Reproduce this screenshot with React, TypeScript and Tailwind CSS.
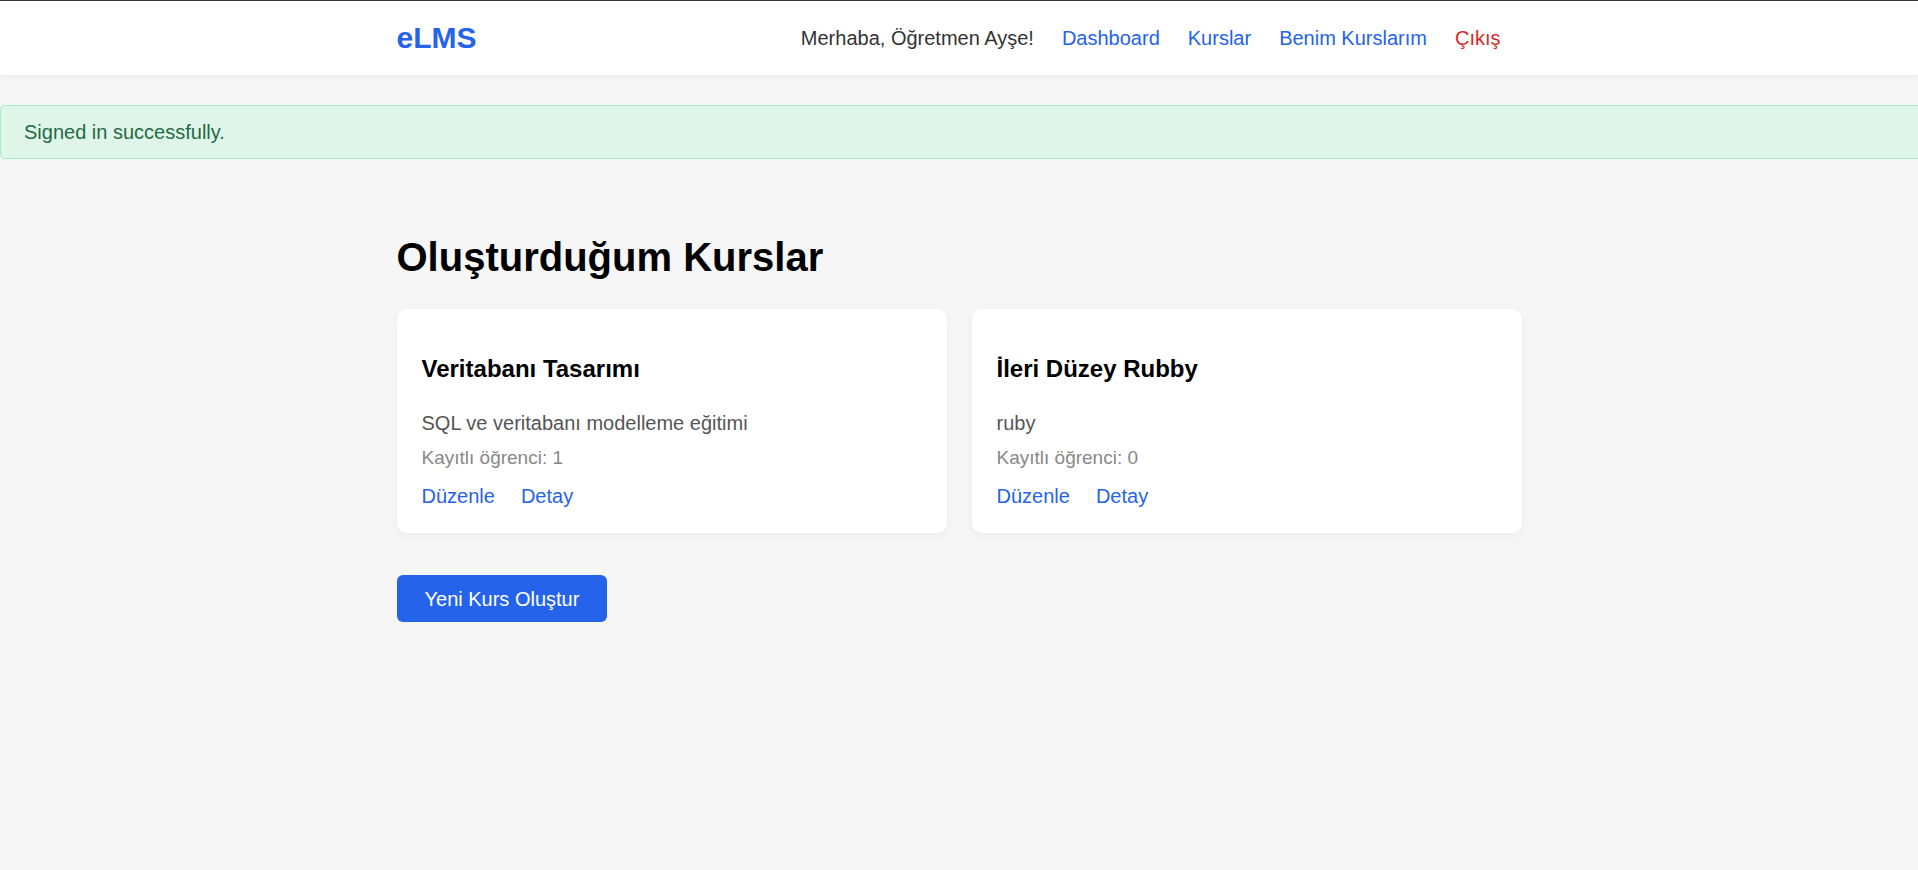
import React from "react";

interface Course {
  id: number;
  title: string;
  description: string;
  students: number;
}

const COURSES: Course[] = [
  {
    id: 1,
    title: "Veritabanı Tasarımı",
    description: "SQL ve veritabanı modelleme eğitimi",
    students: 1,
  },
  { id: 2, title: "İleri Düzey Rubby", description: "ruby", students: 0 },
];

function Navbar() {
  return (
    <>
      <div className="h-px bg-[#3a3a3a]" />
      <header className="bg-white h-[74px] shadow-[0_2px_6px_rgba(0,0,0,0.05)] relative">
        <div className="max-w-[1125px] mx-auto h-full flex items-center justify-between">
          <a href="#" className="text-[30px] font-bold text-[#2563eb] leading-[34px]">
            eLMS
          </a>
          <nav className="flex items-center gap-7 pr-[21px] text-[20px] leading-[24px]">
            <span className="text-[#333]">Merhaba, Öğretmen Ayşe!</span>
            <a href="#" className="text-[#2563eb]">
              Dashboard
            </a>
            <a href="#" className="text-[#2563eb]">
              Kurslar
            </a>
            <a href="#" className="text-[#2563eb]">
              Benim Kurslarım
            </a>
            <a href="#" className="text-[#dc2626]">
              Çıkış
            </a>
          </nav>
        </div>
      </header>
    </>
  );
}

function CourseCard({ course }: { course: Course }) {
  return (
    <div className="bg-white rounded-[10px] shadow-[0_2px_10px_rgba(0,0,0,0.05)] px-[25px] pt-[46px] pb-[25px]">
      <h3 className="text-[24px] font-bold leading-[28px] text-black">
        {course.title}
      </h3>
      <p className="mt-[28px] text-[20px] leading-[24px] text-[#555]">
        {course.description}
      </p>
      <p className="mt-[12px] text-[19px] leading-[22px] text-[#888]">
        Kayıtlı öğrenci: {course.students}
      </p>
      <div className="mt-[15px] flex text-[20px] leading-[24px] text-[#2563eb]">
        <a href="#" className="mr-[26px]">
          Düzenle
        </a>
        <a href="#">Detay</a>
      </div>
    </div>
  );
}

export default function App() {
  return (
    <div className="min-h-screen overflow-hidden bg-[#f6f6f6] font-['Liberation_Sans',Arial,sans-serif]">
      <Navbar />

      <div className="mt-[30px] w-[calc(100%+24px)] bg-[#e0f5ea] border border-[#a9e8c8] rounded-[5px] px-[23px] py-[14px] text-[20px] leading-[24px] text-[#1f6b42]">
        Signed in successfully.
      </div>

      <main className="max-w-[1125px] mx-auto pt-[75px] pb-10">
        <h1 className="text-[40px] font-bold leading-[46px] text-black">
          Oluşturduğum Kurslar
        </h1>

        <div className="mt-[29px] grid grid-cols-2 gap-[25px]">
          {COURSES.map((course) => (
            <CourseCard key={course.id} course={course} />
          ))}
        </div>

        <button
          type="button"
          className="mt-[42px] h-[47px] px-[28px] flex items-center rounded-[6px] bg-[#2563eb] text-white text-[20px] leading-[24px]"
        >
          Yeni Kurs Oluştur
        </button>
      </main>
    </div>
  );
}
